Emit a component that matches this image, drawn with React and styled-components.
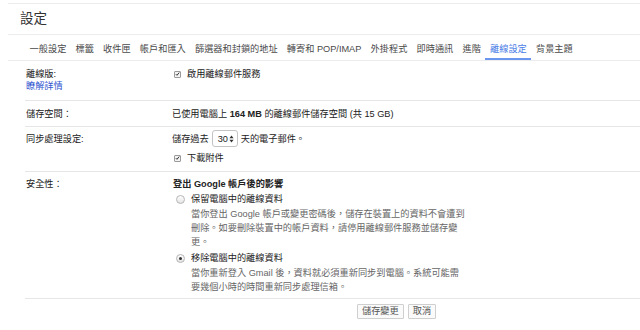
import React from 'react';
import styled, { createGlobalStyle } from 'styled-components';

const GlobalStyle = createGlobalStyle`
	html, body {
		margin: 0;
		padding: 0;
		background: #fff;
	}
	body {
		font-family: "Liberation Sans", "Noto Sans CJK TC", sans-serif;
		font-size: 9.2px;
		color: #222;
	}
`;

const tabs = ['一般設定', '標籤', '收件匣', '帳戶和匯入', '篩選器和封鎖的地址', '轉寄和 POP/IMAP', '外掛程式', '即時通訊', '進階', '離線設定', '背景主題'];

const CheckBox = () => (
	<S.Box>
		<svg width='6' height='6' viewBox='0 0 6 6'>
			<path d='M1 3.2 L2.4 4.6 L5 1.3' fill='none' stroke='#333' strokeWidth='1.2' />
		</svg>
	</S.Box>
);

const SpinArrows = () => (
	<svg width='5' height='8' viewBox='0 0 5 8'>
		<path d='M2.5 0.5 L4.6 3.2 H0.4 Z M2.5 7.5 L4.6 4.8 H0.4 Z' fill='#333' />
	</svg>
);

const App = () => {
	return (
		<>
			<GlobalStyle />
			<S.Page>
				<S.Header>設定</S.Header>
				<S.Tabs>
					{tabs.map(t => (
						<S.Tab key={t} $active={t === '離線設定'}>{t}</S.Tab>
					))}
				</S.Tabs>
				<S.Rows>
					<S.Row $pad='7px 0 8px'>
						<S.Label>
							<div>離線版:</div>
							<S.Link>瞭解詳情</S.Link>
						</S.Label>
						<S.Value>
							<S.Check><CheckBox />啟用離線郵件服務</S.Check>
						</S.Value>
					</S.Row>
					<S.Row $pad='7px 0 6px'>
						<S.Label>儲存空間：</S.Label>
						<S.Value>已使用電腦上 <b>164 MB</b> 的離線郵件儲存空間 (共 15 GB)</S.Value>
					</S.Row>
					<S.Row $pad='3px 0 7px'>
						<S.Label $top='3px'>同步處理設定:</S.Label>
						<S.Value>
							<S.Inline>
								儲存過去
								<S.Select>30<SpinArrows /></S.Select>
								天的電子郵件。
							</S.Inline>
							<S.Check $top='5px'><CheckBox />下載附件</S.Check>
						</S.Value>
					</S.Row>
					<S.Row $pad='6px 0 4px'>
						<S.Label>安全性：</S.Label>
						<S.Value>
							<S.Heading>登出 Google 帳戶後的影響</S.Heading>
							<S.Option>
								<S.Radio />
								<div>
									<S.OptTitle>保留電腦中的離線資料</S.OptTitle>
									<S.Desc>
										當你登出 Google 帳戶或變更密碼後，儲存在裝置上的資料不會遭到<br />
										刪除。如要刪除裝置中的帳戶資料，請停用離線郵件服務並儲存變<br />
										更。
									</S.Desc>
								</div>
							</S.Option>
							<S.Option>
								<S.Radio $checked />
								<div>
									<S.OptTitle>移除電腦中的離線資料</S.OptTitle>
									<S.Desc>
										當你重新登入 Gmail 後，資料就必須重新同步到電腦。系統可能需<br />
										要幾個小時的時間重新同步處理信箱。
									</S.Desc>
								</div>
							</S.Option>
						</S.Value>
					</S.Row>
				</S.Rows>
				<S.Actions>
					<S.Button>儲存變更</S.Button>
					<S.Button>取消</S.Button>
				</S.Actions>
			</S.Page>
		</>
	);
};

export default App;

const S = {};
S.Page = styled.div`
	padding: 3px 0 0 8px;
	width: 632px;
	height: 327px;
	overflow: hidden;
`;

S.Header = styled.div`
	height: 30px;
	line-height: 30px;
	padding-left: 12px;
	font-size: 13.5px;
	color: #333;
	border-top: 1px solid #ececec;
	border-bottom: 1px solid #ececec;
`;

S.Tabs = styled.div`
	display: flex;
	height: 25px;
	padding-left: 17px;
	border-bottom: 1px solid #ececec;
`;

S.Tab = styled.div`
	display: flex;
	align-items: center;
	box-sizing: border-box;
	height: 25px;
	padding: 2px 4.6px 0;
	color: ${p => (p.$active ? '#4a7ee6' : '#4a4a4a')};
	border-bottom: 2px solid ${p => (p.$active ? '#6a96f0' : 'transparent')};
	white-space: nowrap;
`;

S.Rows = styled.div`
	margin-left: 17px;
`;

S.Row = styled.div`
	display: grid;
	grid-template-columns: 147px 1fr;
	padding: ${p => p.$pad};
	border-bottom: 1px solid #e6e6e6;
	line-height: 12px;
`;

S.Label = styled.div`
	padding-left: 1px;
	padding-top: ${p => p.$top || '0'};
	color: #222;
`;

S.Link = styled.div`
	color: #2f56d0;
`;

S.Value = styled.div`
	color: #222;
	b {
		font-weight: bold;
	}
`;

S.Check = styled.div`
	display: flex;
	align-items: center;
	gap: 6px;
	margin-top: ${p => p.$top || '0'};
	padding-left: 2px;
`;

S.Box = styled.span`
	display: inline-flex;
	align-items: center;
	justify-content: center;
	box-sizing: border-box;
	width: 7px;
	height: 7px;
	border: 1px solid #9a9a9a;
	border-radius: 1px;
	background: #f4f4f4;
	svg {
		display: block;
	}
`;

S.Inline = styled.div`
	display: flex;
	align-items: center;
	height: 17px;
`;

S.Select = styled.span`
	display: inline-flex;
	align-items: center;
	justify-content: space-between;
	box-sizing: border-box;
	width: 26px;
	height: 17px;
	margin: 0 3px 0 3px;
	padding: 0 3px 0 5px;
	border: 1px solid #c4c4c4;
	border-radius: 3px;
	background: #fff;
	color: #222;
`;

S.Heading = styled.div`
	font-weight: bold;
	padding-left: 1px;
`;

S.Option = styled.div`
	display: grid;
	grid-template-columns: 19px 1fr;
	margin-top: 3px;
	& + & {
		margin-top: 3px;
	}
`;

S.Radio = styled.span`
	position: relative;
	box-sizing: border-box;
	width: 9px;
	height: 9px;
	margin: 2px 0 0 4px;
	border: 1px solid #b5b5b5;
	border-radius: 50%;
	background: linear-gradient(#ffffff, #e4e4e4);
	&::after {
		content: '';
		display: ${p => (p.$checked ? 'block' : 'none')};
		position: absolute;
		left: 2px;
		top: 2px;
		width: 3px;
		height: 3px;
		border-radius: 50%;
		background: #333;
	}
`;

S.OptTitle = styled.div`
	color: #222;
	margin-bottom: 2px;
`;

S.Desc = styled.div`
	color: #666;
	line-height: 14px;
	white-space: nowrap;
`;

S.Actions = styled.div`
	display: flex;
	gap: 4px;
	padding: 5px 0 0 349px;
`;

S.Button = styled.button`
	height: 15px;
	padding: 0 4px;
	font: inherit;
	line-height: 13px;
	color: #555;
	background: #fafafa;
	border: 1px solid #cfcfcf;
	border-radius: 1px;
`;
